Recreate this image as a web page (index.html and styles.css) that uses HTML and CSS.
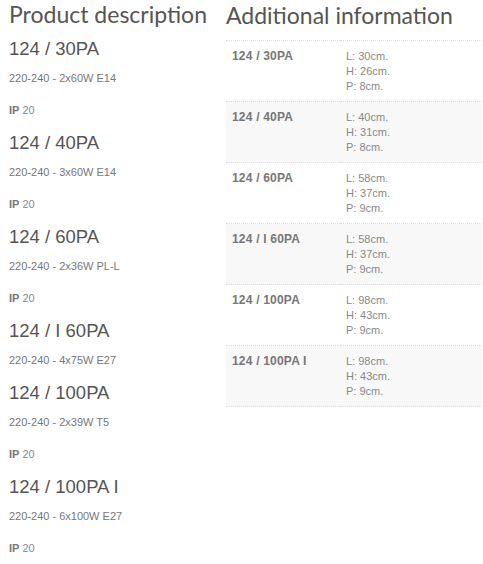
FILE: index.html
```html
<!DOCTYPE html>
<html>
<head>
<meta charset="utf-8">
<link rel="stylesheet" href="styles.css">
</head>
<body>
<div class="page">
  <section class="desc">
    <h2 class="heading">Product description</h2>
    <div class="item">
      <h3 class="title">124 / 30PA</h3>
      <p class="spec">220-240 - 2x60W E14</p>
      <p class="ip"><b>IP</b> 20</p>
    </div>
    <div class="item">
      <h3 class="title">124 / 40PA</h3>
      <p class="spec">220-240 - 3x60W E14</p>
      <p class="ip"><b>IP</b> 20</p>
    </div>
    <div class="item">
      <h3 class="title">124 / 60PA</h3>
      <p class="spec">220-240 - 2x36W PL-L</p>
      <p class="ip"><b>IP</b> 20</p>
    </div>
    <div class="item">
      <h3 class="title">124 / I 60PA</h3>
      <p class="spec">220-240 - 4x75W E27</p>
    </div>
    <div class="item">
      <h3 class="title">124 / 100PA</h3>
      <p class="spec">220-240 - 2x39W T5</p>
      <p class="ip"><b>IP</b> 20</p>
    </div>
    <div class="item">
      <h3 class="title">124 / 100PA I</h3>
      <p class="spec">220-240 - 6x100W E27</p>
      <p class="ip"><b>IP</b> 20</p>
    </div>
  </section>
  <section class="info">
    <h2 class="heading">Additional information</h2>
    <table class="attrs">
      <tr><th>124 / 30PA</th><td>L: 30cm.<br>H: 26cm.<br>P: 8cm.</td></tr>
      <tr><th>124 / 40PA</th><td>L: 40cm.<br>H: 31cm.<br>P: 8cm.</td></tr>
      <tr><th>124 / 60PA</th><td>L: 58cm.<br>H: 37cm.<br>P: 9cm.</td></tr>
      <tr><th>124 / I 60PA</th><td>L: 58cm.<br>H: 37cm.<br>P: 9cm.</td></tr>
      <tr><th>124 / 100PA</th><td>L: 98cm.<br>H: 43cm.<br>P: 9cm.</td></tr>
      <tr><th>124 / 100PA I</th><td>L: 98cm.<br>H: 43cm.<br>P: 9cm.</td></tr>
    </table>
  </section>
</div>
</body>
</html>
```
FILE: styles.css
```css
html, body {
  margin: 0;
  padding: 0;
  background: #fff;
}
body {
  font-family: "Liberation Sans", Arial, sans-serif;
  color: #777;
}
.page {
  display: flex;
  gap: 17px;
  padding: 0 1px 0 9px;
}
.desc {
  width: 200px;
  flex: none;
}
.info {
  flex: 1;
}
.heading {
  font-family: Lato, "Open Sans", sans-serif;
  font-weight: 400;
  font-size: 23px;
  line-height: 28px;
  color: #555;
  margin: 0;
}
.info .heading {
  margin-top: 1px;
  margin-bottom: 1px;
}
.title {
  font-weight: 400;
  font-size: 18.5px;
  line-height: 22px;
  color: #555;
  margin: 10px 0 0;
}
.spec {
  font-size: 11px;
  line-height: 14px;
  margin: 11px 0 0;
  color: #777;
}
.ip {
  font-size: 11px;
  line-height: 14px;
  margin: 18px 0 0;
  color: #888;
}
.ip b {
  color: #777;
}
.item + .item .title {
  margin-top: 15px;
}
.attrs {
  width: 100%;
  border-collapse: collapse;
  margin-top: 11px;
  border-top: 1px dotted #ddd;
}
.attrs tr {
  border-bottom: 1px dotted #ddd;
}
.attrs tr:nth-child(even) {
  background: #f8f8f8;
}
.attrs th, .attrs td {
  vertical-align: top;
  text-align: left;
  font-size: 11px;
  line-height: 15px;
  padding: 8px 0 7px 6px;
}
.attrs th {
  width: 108px;
  font-size: 12px;
  letter-spacing: 0.2px;
  font-weight: 700;
  color: #777;
}
.attrs td {
  color: #888;
}
```
